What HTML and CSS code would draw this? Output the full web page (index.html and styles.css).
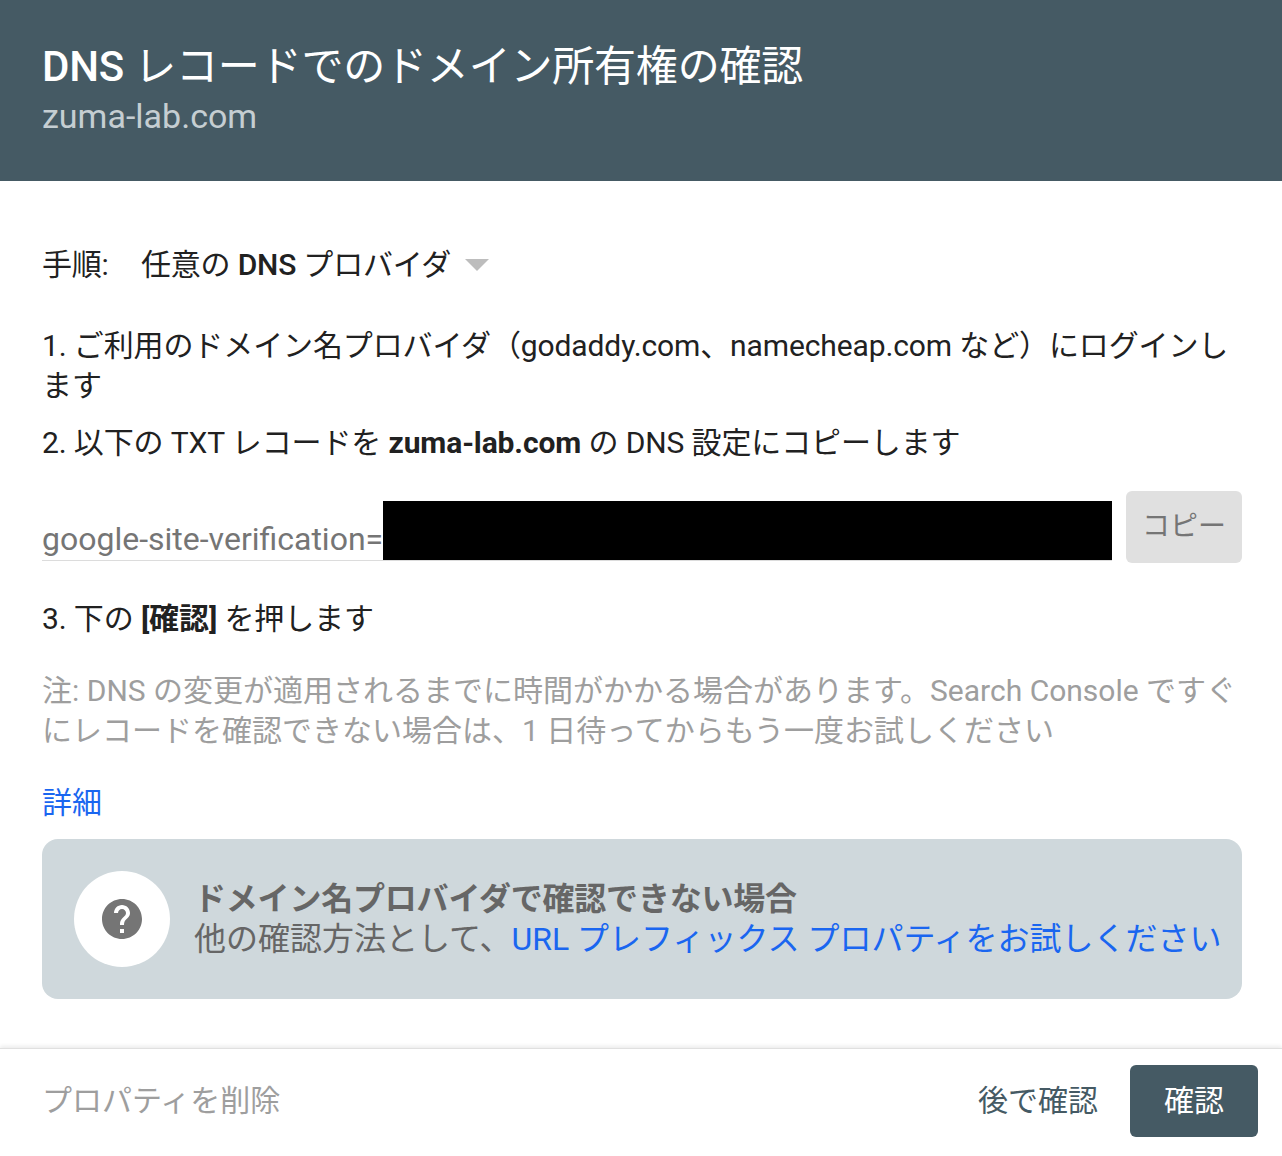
FILE: index.html
```html
<!DOCTYPE html>
<html lang="ja">
  <head>
    <meta charset="UTF-8" />
    <title>DNS レコードでのドメイン所有権の確認</title>
    <link rel="stylesheet" href="styles.css">
  </head>
  <body>
    <main>
      <!-- Header -->
      <header>
        <h1><b>DNS</b> レコードでのドメイン所有権の確認</h1>
        <p class="domain">zuma-lab.com</p>
      </header>

      <div class="content">
        <!-- Provider select -->
        <div class="provider">
          <span class="provider-label">手順:</span>
          <span class="provider-value">任意の <b>DNS</b> プロバイダ</span>
          <span class="caret"></span>
        </div>

        <p class="step step-first">1. ご利用のドメイン名プロバイダ（godaddy.com、namecheap.com など）にログインします</p>
        <p class="step">2. 以下の TXT レコードを <b>zuma-lab.com</b> の DNS 設定にコピーします</p>

        <div class="record">
          <div class="record-field">
            <span class="record-text">google-site-verification=</span>
            <span class="redacted"></span>
          </div>
          <button class="copy" type="button">コピー</button>
        </div>

        <p class="step step-last">3. 下の <b>[確認]</b> を押します</p>

        <p class="note">注: DNS の変更が適用されるまでに時間がかかる場合があります。Search Console ですぐにレコードを確認できない場合は、1 日待ってからもう一度お試しください</p>

        <a class="more" href="#">詳細</a>

        <!-- Help box -->
        <div class="help">
          <div class="help-icon">
            <svg width="48" height="48" viewBox="0 0 24 24">
              <path fill="#757575" d="M12 2C6.48 2 2 6.48 2 12s4.48 10 10 10 10-4.48 10-10S17.52 2 12 2zm1 17h-2v-2h2v2zm2.07-7.75l-.9.92C13.45 12.9 13 13.5 13 15h-2v-.5c0-1.1.45-2.1 1.17-2.83l1.24-1.26c.37-.36.59-.86.59-1.41 0-1.1-.9-2-2-2s-2 .9-2 2H8c0-2.21 1.79-4 4-4s4 1.79 4 4c0 .88-.36 1.68-.93 2.25z"/>
            </svg>
          </div>
          <div class="help-text">
            <b>ドメイン名プロバイダで確認できない場合</b>
            <span>他の確認方法として、<a href="#">URL プレフィックス プロパティをお試しください</a></span>
          </div>
        </div>
      </div>

      <footer>
        <a class="remove" href="#">プロパティを削除</a>
        <div class="actions">
          <button class="later" type="button">後で確認</button>
          <button class="verify" type="button">確認</button>
        </div>
      </footer>
    </main>
  </body>
</html>
```

FILE: styles.css
```css
:root {
  --header-bg: #455a64;
  --text-primary: #212121;
  --text-secondary: #757575;
  --text-muted: #9e9e9e;
  --link: #1a66f0;
  --help-bg: #cfd8dc;
}

* {
  margin: 0;
  padding: 0;
  box-sizing: border-box;
}

body {
  background-color: #fff;
  color: var(--text-primary);
  font-family: Roboto, "Noto Sans CJK JP", sans-serif;
  font-size: 30px;
  line-height: 40px;
}

main {
  display: flex;
  flex-direction: column;
  min-height: 100vh;
}

header {
  height: 181px;
  padding: 42px 42px 0;
  background-color: var(--header-bg);
  color: #fff;
}

header h1 {
  font-size: 42px;
  font-weight: 400;
  letter-spacing: -0.2px;
  line-height: 50px;
}

header h1 b {
  font-weight: 500;
}

.domain {
  font-size: 34px;
  line-height: 48px;
  color: #c5ced2;
}

b {
  font-weight: 700;
}

.content {
  flex: 1;
  padding: 64px 40px 0 42px;
}

.provider {
  display: flex;
  align-items: center;
  height: 40px;
  letter-spacing: -0.2px;
}

.provider-label {
  width: 99px;
}

.provider-value b {
  font-weight: 500;
}

.caret {
  margin-left: 14px;
  border-left: 12px solid transparent;
  border-right: 12px solid transparent;
  border-top: 12px solid #bdbdbd;
}

.step {
  margin-top: 17px;
  letter-spacing: -0.12px;
}

.step-first {
  margin-top: 41px;
}

.step-last {
  margin-top: 36px;
}

.record {
  display: flex;
  gap: 14px;
  margin-top: 28px;
}

.record-field {
  flex: 1;
  display: flex;
  align-items: flex-end;
  height: 70px;
  border-bottom: 1px solid #dcdcdc;
  color: var(--text-secondary);
  font-size: 32px;
}

.record-text {
  padding-bottom: 3px;
  line-height: 36px;
}

.redacted {
  flex: 1;
  height: 59px;
  background-color: #000;
}

.copy {
  width: 116px;
  height: 72px;
  border: none;
  border-radius: 6px;
  background-color: #e0e0e0;
  color: #757575;
  font: inherit;
  font-size: 28px;
}

.note {
  margin-top: 32px;
  color: var(--text-muted);
}

.more {
  display: block;
  margin-top: 32px;
  color: var(--link);
  text-decoration: none;
}

.help {
  display: flex;
  align-items: center;
  gap: 24px;
  height: 160px;
  margin-top: 16px;
  padding: 0 16px 0 32px;
  border-radius: 16px;
  background-color: var(--help-bg);
  color: #666;
  font-size: 32px;
}

.help-icon {
  flex-shrink: 0;
  display: flex;
  align-items: center;
  justify-content: center;
  width: 96px;
  height: 96px;
  border-radius: 50%;
  background-color: #fff;
}

.help-text {
  display: flex;
  flex-direction: column;
  white-space: nowrap;
}

.help-text b {
  letter-spacing: -0.2px;
}

.help-text a {
  color: var(--link);
  text-decoration: none;
}

footer {
  display: flex;
  justify-content: space-between;
  align-items: center;
  height: 108px;
  padding: 0 24px 4px 42px;
  border-top: 1px solid #e0e0e0;
  box-shadow: 0 -2px 4px rgba(0, 0, 0, 0.08);
}

.remove {
  color: var(--text-muted);
  text-decoration: none;
}

.actions {
  display: flex;
  align-items: center;
  gap: 32px;
}

.later {
  border: none;
  background: none;
  color: var(--header-bg);
  font: inherit;
}

.verify {
  width: 128px;
  height: 72px;
  border: none;
  border-radius: 6px;
  background-color: var(--header-bg);
  color: #fff;
  font: inherit;
}
```
